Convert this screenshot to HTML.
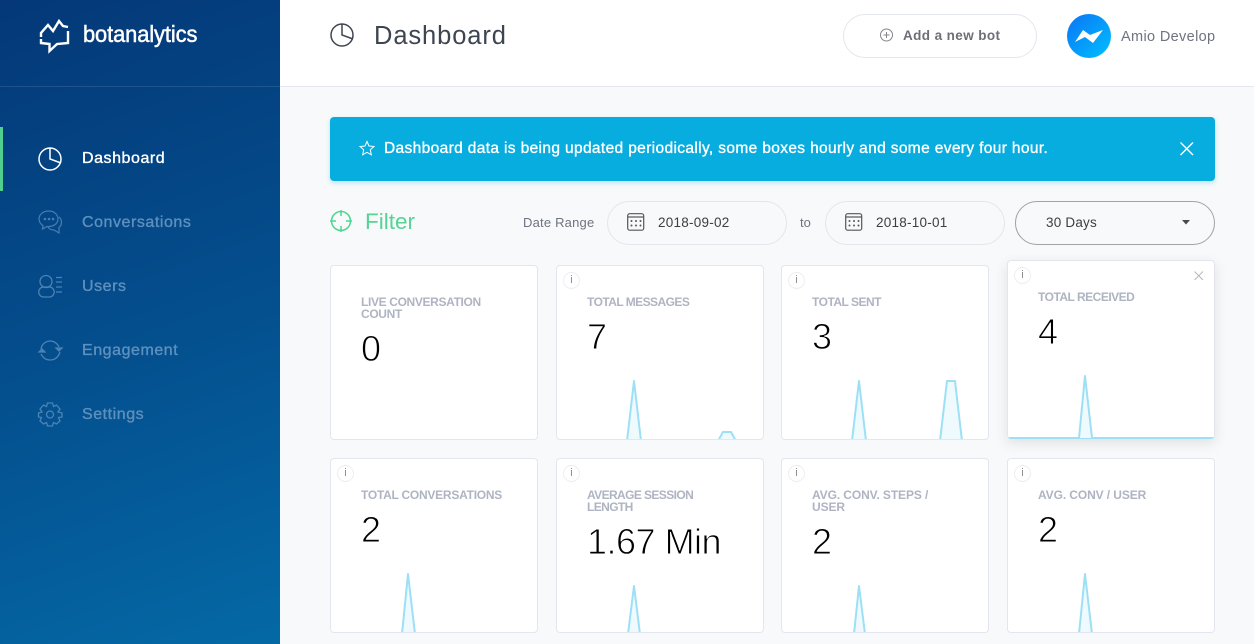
<!DOCTYPE html>
<html><head><meta charset="utf-8"><title>Dashboard</title>
<style>
html,body{margin:0;padding:0}
body{width:1254px;height:644px;overflow:hidden;position:relative;background:#f7f9fa;font-family:"Liberation Sans",sans-serif}
.a{position:absolute;white-space:nowrap}
svg{position:absolute;overflow:visible}
#side{position:absolute;left:0;top:0;width:280px;height:644px;background:linear-gradient(160deg,#043878 0%,#04508f 55%,#0469a5 100%)}
.nav{position:absolute;left:82px;font-size:16px;line-height:20px;color:#5e90bd;letter-spacing:.55px;-webkit-text-stroke:.35px currentColor}
.card{position:absolute;width:206px;height:173px;background:#fff;border:1px solid #e3e6ee;border-radius:4px;overflow:hidden}
.lb{position:absolute;left:30px;font-size:12px;line-height:12px;font-weight:700;color:#aeb4c2;white-space:nowrap}
.v{position:absolute;left:30px;font-size:36px;line-height:36px;color:#000;white-space:nowrap;-webkit-text-stroke:.9px #fff}
.i{position:absolute;left:6px;top:6px;width:15px;height:15px;border:1px solid #eceef3;border-radius:50%;font-size:11px;line-height:15px;text-align:center;color:#8b8b8b}
.pill{position:absolute;height:42px;border:1px solid #e3e6ee;border-radius:22px;top:201px}
.dt{font-size:13.5px;line-height:18px;color:#3d3d44;letter-spacing:.25px;top:214px}
.c svg{left:0;top:0}
polygon,polyline{stroke-linejoin:round}
</style></head><body>

<div id="side">
  <div class="a" style="left:0;top:86px;width:280px;height:1px;background:rgba(255,255,255,.11)"></div>
  <svg style="left:0;top:0" width="80" height="60" fill="none" stroke="#fff" stroke-width="2.4">
    <path d="M41 37 L41 33 L48 25 L53 31 L59 21 L63 26 L68 27 M68 31 L68 43 L57 44 L49.500 51 L49.500 44 L41 43 L41 39"/>
  </svg>
  <div class="a" style="left:83px;top:20px;font-size:23.500px;line-height:28px;color:#fff;letter-spacing:-.1px;transform:scaleX(.93);transform-origin:0 0;-webkit-text-stroke:.5px #fff">botanalytics</div>
  <div class="a" style="left:0;top:127px;width:3px;height:64px;background:#4fd08f"></div>

  <svg style="left:38px;top:146px" width="25" height="25" fill="none" stroke="#fff" stroke-width="1.500">
    <circle cx="12" cy="13" r="11"/><path d="M12 1.500 V13 L23 17"/>
  </svg>
  <div class="nav" style="top:149px;color:#fff">Dashboard</div>

  <svg style="left:38px;top:210px" width="25" height="25" fill="none" stroke="#5e90bd" stroke-width="1.200" opacity=".75">
    <path d="M11 1 C5 1 1 4.500 1 9 C1 12 3 14.500 5 15.500 L4.500 19 L9 16.500 C15 17 20 14 20 9 C20 4.500 16 1 11 1Z"/>
    <path d="M21 7 C24 9 24.500 15 21 17.500 L21 23 L16 20 C13 20 11 19 10 17"/>
    <circle cx="7" cy="9" r=".7"/><circle cx="11" cy="9" r=".7"/><circle cx="15" cy="9" r=".7"/>
  </svg>
  <div class="nav" style="top:213px">Conversations</div>

  <svg style="left:38px;top:274px" width="25" height="25" fill="none" stroke="#5e90bd" stroke-width="1.300" opacity=".8">
    <circle cx="8" cy="7.500" r="6"/><rect x="0.700" y="13" width="15.500" height="10" rx="5"/>
    <path d="M18 3.500 H24 M18 8 H24 M18 13 H24 M18 18 H24"/>
  </svg>
  <div class="nav" style="top:277px">Users</div>

  <svg style="left:38px;top:338px" width="25" height="25" fill="none" stroke="#5e90bd" stroke-width="1.300" opacity=".8">
    <path d="M3 11 C4 5 9 3 12 3 C16 3 19 5 21 9"/><path d="M22 14 C20 20 16 22 12 22 C8 22 5 20 3 16"/>
    <path d="M18 10 H24 L21 13 Z" fill="#5e90bd"/><path d="M1 14 H7 L4 11 Z" fill="#5e90bd"/>
  </svg>
  <div class="nav" style="top:341px">Engagement</div>

  <svg style="left:38px;top:402px" width="25" height="25" fill="none" stroke="#5e90bd" stroke-width="1.300" opacity=".8">
    <circle cx="12" cy="12.500" r="3.500"/>
    <path d="M9.500 1 H14.500 L15.500 4.500 L18.500 3 L22 7 L20 10 L24 11 V15 L20.500 15.500 L22 19 L18.500 22 L15.500 20.500 L14.500 24 H9.500 L8.500 20.500 L5.500 22 L2 19 L3.500 15.500 L0.500 15 V11 L4 10 L2 7 L5.500 3 L8.500 4.500 Z"/>
  </svg>
  <div class="nav" style="top:405px">Settings</div>
</div>

<!-- header -->
<div class="a" style="left:280px;top:0;width:974px;height:86px;background:#fff;border-bottom:1px solid #e3e6ee"></div>
<svg style="left:330px;top:22px" width="25" height="25" fill="none" stroke="#3f4650" stroke-width="1.500">
  <circle cx="12" cy="13" r="11"/><path d="M12 1.500 V13 L23 17"/>
</svg>
<div class="a" style="left:374px;top:21px;font-size:25.500px;line-height:30px;color:#3d4550;letter-spacing:.9px">Dashboard</div>
<div class="a" style="left:843px;top:14px;width:192px;height:42px;border:1px solid #e3e6ee;border-radius:22px;background:#fff"></div>
<svg style="left:880px;top:29px" width="14" height="14" fill="none" stroke="#85858c" stroke-width="1">
  <circle cx="6.500" cy="6" r="6"/><path d="M6.500 3 V9 M3.500 6 H9.500"/>
</svg>
<div class="a" style="left:903px;top:27px;font-size:13.500px;line-height:18px;font-weight:700;color:#6e6e78;letter-spacing:.4px">Add a new bot</div>
<div class="a" style="left:1067px;top:14px;width:44px;height:44px;border-radius:50%;background:linear-gradient(135deg,#0a7cf5 10%,#01b4ff 85%)"></div>
<svg style="left:1067px;top:14px" width="44" height="44"><path d="M8 28 L16 16 L23 21 L36 16 L26 29 L18 23 Z" fill="#fff"/></svg>
<div class="a" style="left:1121px;top:28px;font-size:14.500px;line-height:18px;color:#6f7380;letter-spacing:.35px">Amio Develop</div>

<!-- banner -->
<div class="a" style="left:330px;top:117px;width:885px;height:64px;border-radius:4px;background:#08ade0;box-shadow:0 2px 5px rgba(8,173,224,.25)"></div>
<svg style="left:359px;top:140px" width="16" height="16" fill="none" stroke="#fff" stroke-width="1">
  <path d="M8 1.500 L10 6 L15 6.500 L11.300 9.800 L12.300 14.800 L8 12.300 L3.700 14.800 L4.700 9.800 L1 6.500 L6 6 Z"/>
</svg>
<div class="a" style="left:384px;top:140px;font-size:15.500px;line-height:18px;color:#fff;letter-spacing:.36px;-webkit-text-stroke:.35px #fff">Dashboard data is being updated periodically, some boxes hourly and some every four hour.</div>
<svg style="left:1180px;top:142px" width="14" height="14" stroke="#fff" stroke-width="1.400"><path d="M.5 .5 L13 13 M13 .5 L.5 13"/></svg>

<!-- filter -->
<svg style="left:330px;top:210px" width="22" height="22" fill="none" stroke="#4fd593" stroke-width="1.500">
  <circle cx="11" cy="11" r="9.500"/><path d="M11 0 V6 M11 16 V22 M0 11 H6 M16 11 H22"/>
</svg>
<div class="a" style="left:365px;top:208px;font-size:22.500px;line-height:28px;color:#58d396">Filter</div>
<div class="a" style="left:523px;top:214px;font-size:13px;line-height:18px;color:#6f7380;letter-spacing:.2px">Date Range</div>
<div class="pill" style="left:607px;width:178px"></div>
<svg style="left:627px;top:213px" width="18" height="18" fill="none" stroke="#53565e" stroke-width="1.200">
  <rect x=".7" y=".7" width="16" height="16.500" rx="2"/><path d="M1 4 H17"/>
  <g fill="#53565e" stroke="none"><circle cx="4.500" cy="8" r="1"/><circle cx="9" cy="8" r="1"/><circle cx="13.500" cy="8" r="1"/><circle cx="4.500" cy="12.500" r="1"/><circle cx="9" cy="12.500" r="1"/><circle cx="13.500" cy="12.500" r="1"/></g>
</svg>
<div class="a dt" style="left:658px">2018-09-02</div>
<div class="a" style="left:800px;top:214px;font-size:13px;line-height:18px;color:#6f7380">to</div>
<div class="pill" style="left:825px;width:178px"></div>
<svg style="left:845px;top:213px" width="18" height="18" fill="none" stroke="#53565e" stroke-width="1.200">
  <rect x=".7" y=".7" width="16" height="16.500" rx="2"/><path d="M1 4 H17"/>
  <g fill="#53565e" stroke="none"><circle cx="4.500" cy="8" r="1"/><circle cx="9" cy="8" r="1"/><circle cx="13.500" cy="8" r="1"/><circle cx="4.500" cy="12.500" r="1"/><circle cx="9" cy="12.500" r="1"/><circle cx="13.500" cy="12.500" r="1"/></g>
</svg>
<div class="a dt" style="left:876px">2018-10-01</div>
<div class="pill" style="left:1015px;width:198px;border-color:#a3a3a3"></div>
<div class="a" style="left:1046px;top:214px;font-size:13.500px;line-height:18px;color:#3d3d44;letter-spacing:.2px">30 Days</div>
<svg style="left:1182px;top:220px" width="9" height="5"><path d="M0 0 H8 L4 4.500 Z" fill="#4a4a4a"/></svg>

<!-- row 1 -->
<div class="card" style="left:330px;top:265px">
  <div class="lb" style="top:30px;letter-spacing:-.35px">LIVE CONVERSATION<br>COUNT</div>
  <div class="v" style="top:65px">0</div>
</div>
<div class="card c" style="left:556px;top:265px">
  <div class="i">i</div>
  <div class="lb" style="top:30px;letter-spacing:-.55px">TOTAL MESSAGES</div>
  <div class="v" style="top:53px">7</div>
  <svg width="206" height="173"><polygon points="70,175 77,115 84,175" fill="#effaff" stroke="#9de0f5" stroke-width="2"/><polygon points="161,175 166,166 174,166 179,175" fill="#effaff" stroke="#9de0f5" stroke-width="2"/></svg>
</div>
<div class="card c" style="left:781px;top:265px">
  <div class="i">i</div>
  <div class="lb" style="top:30px;letter-spacing:-.5px">TOTAL SENT</div>
  <div class="v" style="top:53px">3</div>
  <svg width="206" height="173"><polygon points="70,175 77,115 84,175" fill="#effaff" stroke="#9de0f5" stroke-width="2"/><polygon points="158,175 165,115 173,115 180,175" fill="#effaff" stroke="#9de0f5" stroke-width="2"/></svg>
</div>
<div class="card c" style="left:1007px;top:260px;height:177px;border-bottom:1px solid #9de0f5;box-shadow:0 4px 12px rgba(60,70,90,.13)">
  <div class="i">i</div>
  <svg style="left:186px;top:10px" width="10" height="10" stroke="#b5b8bf" stroke-width="1"><path d="M.5 .5 L9 9 M9 .5 L.5 9"/></svg>
  <div class="lb" style="top:30px;letter-spacing:-.5px">TOTAL RECEIVED</div>
  <div class="v" style="top:53px">4</div>
  <svg width="206" height="177"><polyline points="0,177 71,177 77,115 84,177 206,177" fill="#effaff" stroke="#9de0f5" stroke-width="2"/></svg>
</div>

<!-- row 2 -->
<div class="card c" style="left:330px;top:458px">
  <div class="i">i</div>
  <div class="lb" style="top:30px;letter-spacing:-.25px">TOTAL CONVERSATIONS</div>
  <div class="v" style="top:53px">2</div>
  <svg width="206" height="173"><polygon points="71,175 77,115 84,175" fill="#effaff" stroke="#9de0f5" stroke-width="2"/></svg>
</div>
<div class="card c" style="left:556px;top:458px">
  <div class="i">i</div>
  <div class="lb" style="top:30px;letter-spacing:-.6px">AVERAGE SESSION<br>LENGTH</div>
  <div class="v" style="top:65px;letter-spacing:-.5px">1.67 Min</div>
  <svg width="206" height="173"><polygon points="71,175 77,127 83,175" fill="#effaff" stroke="#9de0f5" stroke-width="2"/></svg>
</div>
<div class="card c" style="left:781px;top:458px">
  <div class="i">i</div>
  <div class="lb" style="top:30px;letter-spacing:-.1px">AVG. CONV. STEPS /<br>USER</div>
  <div class="v" style="top:65px">2</div>
  <svg width="206" height="173"><polygon points="72,175 77,127 83,175" fill="#effaff" stroke="#9de0f5" stroke-width="2"/></svg>
</div>
<div class="card c" style="left:1007px;top:458px">
  <div class="i">i</div>
  <div class="lb" style="top:30px;letter-spacing:-.1px">AVG. CONV / USER</div>
  <div class="v" style="top:53px">2</div>
  <svg width="206" height="173"><polygon points="71,175 77,115 84,175" fill="#effaff" stroke="#9de0f5" stroke-width="2"/></svg>
</div>

</body></html>
